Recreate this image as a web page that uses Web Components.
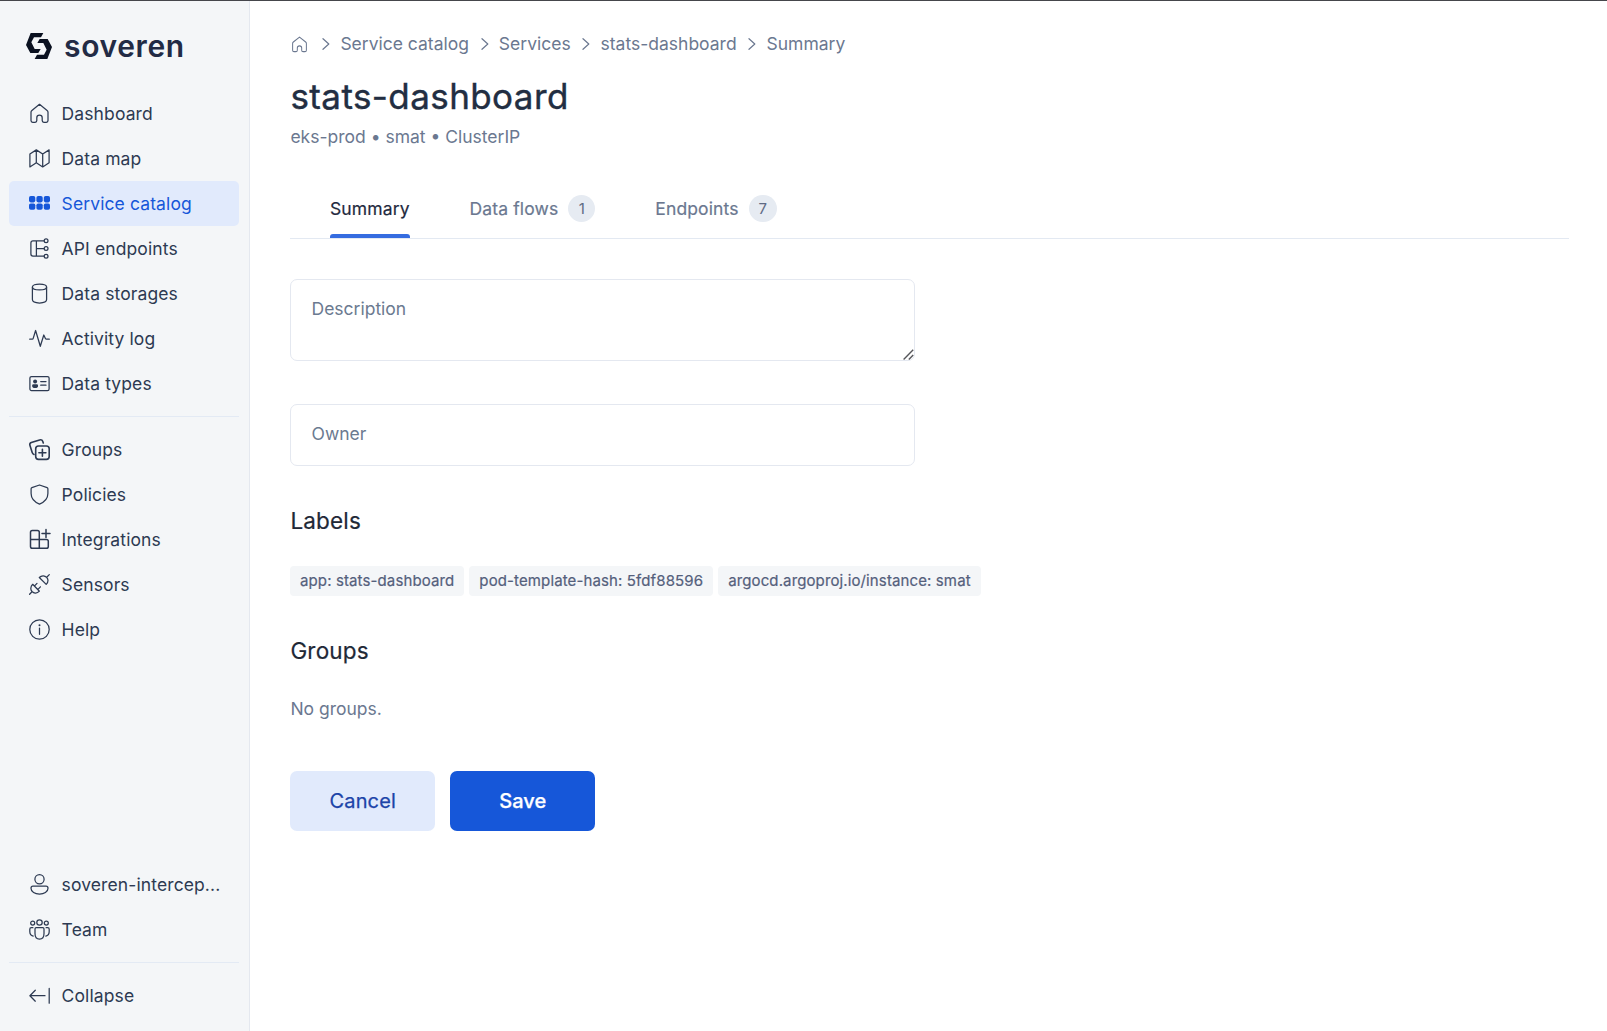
<!DOCTYPE html>
<html lang="en">
<head>
<meta charset="utf-8">
<title>stats-dashboard</title>
<style>
html,body{margin:0;height:100%}
body{font-family:Inter,"Liberation Sans",sans-serif;font-size:17.5px;background:#fff;color:#2d3a52;overflow:hidden}
</style>
</head>
<body>
<sv-app></sv-app>
<script>
const ICONS={
home:'<path d="M10.5 1.3 2.9 7.4Q2 8.1 2 9.3v8.3q0 1.7 1.7 1.7h2.4q1.7 0 1.7-1.7v-2.8q0-2.6 2.7-2.6t2.7 2.6v2.8q0 1.7 1.7 1.7h2.4q1.7 0 1.7-1.7V9.3q0-1.2-.9-1.9Z"/>',
map:'<path d="M.9 6 7.3 1.9 13.7 6 20.1 1.9V14.7L13.7 18.9 7.3 14.7.9 18.9ZM7.3 1.9V14.7M13.7 6V18.9"/>',
grid:'<g fill="currentColor" stroke="none"><rect x="0" y="3" width="6.3" height="6.4" rx="1.8"/><rect x="7.4" y="3" width="6.3" height="6.4" rx="1.8"/><rect x="14.8" y="3" width="6.2" height="6.4" rx="1.8"/><rect x="0" y="10.4" width="6.3" height="6.4" rx="1.8"/><rect x="7.4" y="10.4" width="6.3" height="6.4" rx="1.8"/><rect x="14.8" y="10.4" width="6.2" height="6.4" rx="1.8"/></g>',
api:'<path d="M15 2.8H4Q1.9 2.8 1.9 4.9V16.1Q1.9 18.2 4 18.2H15M7.4 2.8V18.2M7.4 10.5H15"/><circle cx="17.1" cy="2.8" r="1.9"/><circle cx="17.1" cy="10.5" r="1.9"/><circle cx="17.1" cy="18.2" r="1.9"/>',
db:'<ellipse cx="10.5" cy="4" rx="7.1" ry="2.9"/><path d="M3.4 4V16.6C3.4 18.6 6.5 20 10.5 20s7.1-1.4 7.1-3.4V4"/>',
activity:'<path d="M.7 11.2H3.2Q4 11.2 4.2 10.4L6.6 2.5 11.3 18.3 14.8 7 16.4 10.5Q16.7 11.2 17.5 11.2H20.3"/>',
types:'<rect x=".9" y="3.5" width="19.2" height="14" rx="1.6"/><circle cx="6.1" cy="8.4" r="2" fill="currentColor" stroke="none"/><path d="M3.1 12.7q0-1.4 1.4-1.4h3.2q1.4 0 1.4 1.4 0 2.3-3 2.3t-3-2.3Z" fill="currentColor" stroke="none"/><path d="M11.7 8.5H17M11.7 12.2H17"/>',
groups:'<g stroke-width="1.6"><rect x="6.7" y="7" width="13.5" height="13.4" rx="2.8"/><path d="M13.4 10.2v7M9.9 13.7h7M5 15.5Q3.7 15 3.2 13.5L.9 6.2Q.3 4.2 2.3 3.5L10.6.9Q13 .2 13.7 2.3L14.3 4"/></g>',
shield:'<path d="M10.5 1 18.1 3.6Q18.9 3.9 18.9 4.8V9.5C18.9 15 15.5 18 10.5 20.1 5.5 18 2.1 15 2.1 9.5V4.8Q2.1 3.9 2.9 3.6Z"/>',
integr:'<g stroke-width="1.5"><path d="M10.3 19.2V3.3Q10.3 1.5 8.5 1.5H3.3Q1.5 1.5 1.5 3.3V17.4Q1.5 19.2 3.3 19.2H17.5Q19.3 19.2 19.3 17.4V12.2Q19.3 10.4 17.5 10.4H1.5M13 4.5h8M17 .4v8"/></g>',
plug:'<path d="M3.7 10.3 10.4 17.2Q8.5 19.3 6.2 19.1 4.5 18.9 3 17.5 1.7 15.9 1.8 14.2 2 11.9 3.7 10.3ZM3 17.8.6 20.3M5.6 11.9 8 9.4M9 15.4 11.4 12.8M10.3 3.5 17.2 10.4Q19.1 8.5 19 6.4 18.9 4.7 17.6 3.4 16.2 1.9 14.3 1.8 12 1.7 10.3 3.5ZM17.7 3.2 20.3.6"/>',
info:'<circle cx="10.5" cy="10.5" r="9.7"/><path d="M10.5 9.1V15.3"/><circle cx="10.5" cy="6.3" r="1" fill="currentColor" stroke="none"/>',
user:'<circle cx="10.5" cy="5.3" r="4.6"/><path d="M4 12.2H17Q19 12.2 19 14.2C19 18 15 20.1 10.5 20.1S2 18 2 14.2Q2 12.2 4 12.2Z"/>',
team:'<circle cx="10.5" cy="3.5" r="2.7"/><circle cx="3.7" cy="4" r="2"/><circle cx="17.3" cy="4" r="2"/><path d="M7.2 8.7H13.8Q15 8.7 15 9.9V14.5C15 18.2 13.2 20.1 10.5 20.1S6 18.2 6 14.5V9.9Q6 8.7 7.2 8.7ZM3.9 8.7H2.3Q.8 8.7.8 10.2V12.5Q.8 16.3 4.2 17.2M17.1 8.7H18.7Q20.2 8.7 20.2 10.2V12.5Q20.2 16.3 16.8 17.2"/>',
collapse:'<path d="M16 10.7H.9M6.3 5.2.9 10.7 6.3 16.2M20.2 3.4V18.2"/>'
};
class Base extends HTMLElement{
  connectedCallback(){if(!this.shadowRoot)this.attachShadow({mode:'open'}).innerHTML=this.view()}
}
const def=(n,f)=>customElements.define(n,class extends Base{view(){return f(this)}});

def('sv-icon',e=>`<style>:host{display:block;flex:none;width:21px;height:21px}svg{display:block;width:100%;height:100%;overflow:visible}</style>
<svg viewBox="0 0 21 21" fill="none" stroke="currentColor" stroke-width="1.25" stroke-linecap="round" stroke-linejoin="round">${ICONS[e.getAttribute('name')]}</svg>`);

def('sv-logo',()=>`<style>:host{display:flex;align-items:center;gap:12px;height:28px;color:#222b45}svg{display:block;flex:none}
span{font-size:30px;font-weight:600;line-height:28px;letter-spacing:.65px}</style>
<svg width="26" height="26" viewBox="78 99 78 78" fill="#0a1120"><path d="M92 99H130L123 112H102L94 127 104 147H122L115 159H91L78 135Z"/><path d="M142 177H104L111 164H132L140 149 130 129H112L119 117H143L156 141Z"/></svg><span>soveren</span>`);

def('sv-nav-item',e=>`<style>:host{display:flex;align-items:center;gap:11.6px;height:45px;padding-left:20px;border-radius:5px;color:#2d3a52;white-space:nowrap;letter-spacing:.11px}
:host([active]){background:#e1eafc;color:#1657d9}</style><sv-icon name="${e.getAttribute('icon')}"></sv-icon><span><slot></slot></span>`);

def('sv-rule',()=>`<style>:host{display:block;height:1px;background:#e3eaf4;margin:10px 0}</style>`);

def('sv-sidebar',()=>`<style>:host{display:flex;flex-direction:column;box-sizing:border-box;width:250px;flex:none;background:#f4f6f8;border-right:1px solid #e4e8ef;padding:31px 10px 13px 9px}
sv-logo{margin:0 0 31px 17px}.sp{flex:1}</style>
<sv-logo></sv-logo>
<sv-nav-item icon="home">Dashboard</sv-nav-item><sv-nav-item icon="map">Data map</sv-nav-item><sv-nav-item icon="grid" active>Service catalog</sv-nav-item><sv-nav-item icon="api">API endpoints</sv-nav-item><sv-nav-item icon="db">Data storages</sv-nav-item><sv-nav-item icon="activity">Activity log</sv-nav-item><sv-nav-item icon="types">Data types</sv-nav-item>
<sv-rule></sv-rule>
<sv-nav-item icon="groups">Groups</sv-nav-item><sv-nav-item icon="shield">Policies</sv-nav-item><sv-nav-item icon="integr">Integrations</sv-nav-item><sv-nav-item icon="plug">Sensors</sv-nav-item><sv-nav-item icon="info">Help</sv-nav-item>
<div class="sp"></div>
<sv-nav-item icon="user">soveren-intercep...</sv-nav-item><sv-nav-item icon="team">Team</sv-nav-item>
<sv-rule></sv-rule>
<sv-nav-item icon="collapse">Collapse</sv-nav-item>`);

def('sv-crumbs',()=>{const c='<svg class="c" width="8" height="12" viewBox="0 0 8 12" fill="none" stroke="currentColor" stroke-width="1.2" stroke-linecap="round" stroke-linejoin="round"><path d="M1 .7 6.8 6 1 11.3"/></svg>';
return `<style>:host{display:flex;align-items:center;height:26px;color:#6b7890;line-height:26px}sv-icon{width:17px;height:17px;margin:1px 2.3px 0 1.2px}.c{display:block;margin:0 10.3px 0 11.6px}</style>
<sv-icon name="home"></sv-icon>${['Service catalog','Services','stats-dashboard','Summary'].map(t=>c+`<span>${t}</span>`).join('')}`});

def('sv-tab',e=>`<style>:host{display:flex;align-items:center;gap:10px;box-sizing:border-box;height:59px;color:#6b7890;-webkit-text-stroke:.2px currentColor;letter-spacing:.12px;position:relative}
:host([active]){color:#1f2a40}:host([active])::after{content:"";position:absolute;left:0;right:0;bottom:0;height:4px;border-radius:3px 3px 0 0;background:#356ce0}
b{font-weight:400;-webkit-text-stroke:0;letter-spacing:0;font-size:15px;line-height:27px;box-sizing:border-box;min-width:27px;padding:0 10px;text-align:center;border-radius:14px;background:#e6ebf2;color:#5f6a84}</style>
<span><slot></slot></span>${e.hasAttribute('count')?`<b>${e.getAttribute('count')}</b>`:''}`);

def('sv-tabs',()=>`<style>:host{display:flex;gap:60px;padding-left:40px;border-bottom:1px solid #e3e9f2}</style><slot></slot>`);

def('sv-field',e=>`<style>:host{display:grid;width:625px}textarea,input{grid-area:1/1;display:block;box-sizing:border-box;width:100%;margin:0;border:1px solid #e4e8f0;border-radius:7px;background:#fff;font:inherit;padding:17px 20.5px 19px;line-height:23px;outline:0;overflow:hidden;resize:none}
textarea{height:82px}input{height:62px;padding:16px 20.5px 20px}::placeholder{color:#6b7a90;opacity:1}svg{grid-area:1/1;place-self:end;display:block;margin:0 1px 1px 0}</style>
${e.hasAttribute('multiline')?`<textarea placeholder="${e.getAttribute('label')}"></textarea><svg width="11" height="11" viewBox="0 0 11 11" stroke="#55565a" stroke-width="1.4"><path d="M.6 10.4 10.2.8M5.8 10.4 10.2 6"/></svg>`:`<input placeholder="${e.getAttribute('label')}">`}`);

def('sv-chip',()=>`<style>:host{display:block;line-height:30px;padding:0 10px;border-radius:4px;background:#f4f6f8;color:#54607c;font-size:15px;-webkit-text-stroke:.2px currentColor;letter-spacing:.12px;white-space:nowrap}</style><slot></slot>`);

def('sv-button',()=>`<style>:host{display:flex;align-items:center;justify-content:center;width:145px;height:60px;border-radius:7px;font-size:20px;-webkit-text-stroke:.25px currentColor;letter-spacing:.15px;text-indent:.5px;background:#e1eafc;color:#1c44a8}:host([primary]){background:#1657d9;color:#fff;font-weight:500;letter-spacing:.05px}</style><slot></slot>`);

def('sv-app',()=>`<style>:host{display:flex;box-sizing:border-box;height:100vh;border-top:1px solid #45464b}
main{flex:1;display:flex;flex-direction:column;padding:30px 38px 0 40px}
h1{margin:18px 0 0;font-size:35px;line-height:42px;font-weight:400;-webkit-text-stroke:.4px currentColor;color:#222e42;letter-spacing:.42px;text-indent:.4px}
p{margin:0;color:#6b7890;line-height:26px;text-indent:.4px}
h2{margin:0;font-size:22.5px;line-height:30px;font-weight:400;-webkit-text-stroke:.2px currentColor;color:#1f2937;letter-spacing:.18px;text-indent:.4px}
.row{display:flex;gap:5px}
</style>
<sv-sidebar></sv-sidebar>
<main>
<sv-crumbs></sv-crumbs>
<h1>stats-dashboard</h1>
<p style="margin-top:7px">eks-prod • smat • ClusterIP</p>
<sv-tabs style="margin-top:29px"><sv-tab active>Summary</sv-tab><sv-tab count="1">Data flows</sv-tab><sv-tab count="7">Endpoints</sv-tab></sv-tabs>
<sv-field multiline label="Description" style="margin-top:40px"></sv-field>
<sv-field label="Owner" style="margin-top:43px"></sv-field>
<h2 style="margin-top:40px">Labels</h2>
<div class="row" style="margin-top:30px"><sv-chip>app: stats-dashboard</sv-chip><sv-chip>pod-template-hash: 5fdf88596</sv-chip><sv-chip>argocd.argoproj.io/instance: smat</sv-chip></div>
<h2 style="margin-top:40px">Groups</h2>
<p style="margin-top:30px">No groups.</p>
<div class="row" style="gap:15px;margin-top:49px"><sv-button>Cancel</sv-button><sv-button primary>Save</sv-button></div>
</main>`);
</script>
</body>
</html>
